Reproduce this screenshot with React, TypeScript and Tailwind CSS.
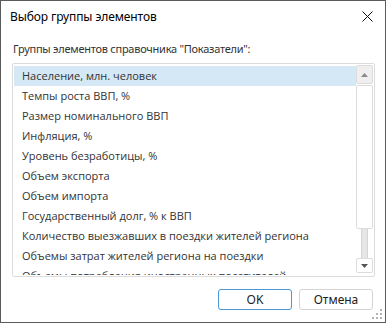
import React from 'react';

const items = [
  'Население, млн. человек',
  'Темпы роста ВВП, %',
  'Размер номинального ВВП',
  'Инфляция, %',
  'Уровень безработицы, %',
  'Объем экспорта',
  'Объем импорта',
  'Государственный долг, % к ВВП',
  'Количество выезжавших в поездки жителей региона',
  'Объемы затрат жителей региона на поездки',
  'Объемы потребления иностранных посетителей',
];

function Grip() {
  const dots = [
    [8, 0],
    [4, 4],
    [8, 4],
    [0, 8],
    [4, 8],
    [8, 8],
  ];
  return (
    <svg width="11" height="11" viewBox="0 0 11 11" className="absolute right-[2px] bottom-[2px]">
      {dots.map(([x, y], i) => (
        <rect key={i} x={x} y={y} width="2" height="2" fill="#b4b4b4" />
      ))}
    </svg>
  );
}

export default function App() {
  return (
    <div className="relative w-[386px] h-[323px] bg-white border border-[#5b5b5b] overflow-hidden font-['Open_Sans',sans-serif] text-[11px] text-[#1e1e1e]">
      {/* title */}
      <div className="flex items-center justify-between h-[31px] pl-[9px] pr-[12px]">
        <span className="font-['Noto_Sans',sans-serif] text-[12px] text-black tracking-[-0.1px]">Выбор группы элементов</span>
        <svg width="11" height="11" viewBox="0 0 11 11">
          <path d="M0.5 0.5 L10.5 10.5 M10.5 0.5 L0.5 10.5" stroke="#111" strokeWidth="1" />
        </svg>
      </div>

      <div className="px-[11px] pt-[9px]">
        <div className="font-['Noto_Sans',sans-serif] text-[11px] text-[#333] leading-[15px] pl-px tracking-[-0.25px]">
          Группы элементов справочника "Показатели":
        </div>

        {/* list */}
        <div className="mt-[7px] h-[214px] w-[363px] border border-[#dcdcdc] rounded-[2px] flex p-px overflow-hidden">
          <div className="flex-1 flex flex-col overflow-hidden">
            {items.map((t, i) => (
              <div
                key={t}
                className={`h-[20px] shrink-0 flex items-center pl-[8px] whitespace-nowrap text-[#333] ${
                  i === 0 ? 'bg-[#d5e8f5] mt-px' : ''
                }`}
              >
                {t}
              </div>
            ))}
          </div>
          {/* scrollbar */}
          <div className="w-[17px] flex flex-col">
            <div className="h-[19px] bg-[#efefef] border border-[#dcdcdc] rounded-[2px] flex items-center justify-center">
              <svg width="7" height="4" viewBox="0 0 7 4">
                <path d="M3.5 0 L7 4 L0 4 Z" fill="#8a8a8a" />
              </svg>
            </div>
            <div className="h-[144px] mt-px border border-[#dcdcdc] rounded-[2px] bg-white" />
            <div className="flex-1 flex justify-center">
              <div className="w-[7px] bg-[#e6e6e6] border-x border-[#d4d4d4]" />
            </div>
            <div className="h-[15px] border border-[#dcdcdc] rounded-[2px] bg-white flex items-center justify-center mb-[2px]">
              <svg width="7" height="4" viewBox="0 0 7 4">
                <path d="M0 0 L7 0 L3.5 4 Z" fill="#555" />
              </svg>
            </div>
          </div>
        </div>

        {/* buttons */}
        <div className="flex justify-end gap-[7px] mt-[12px] pr-px">
          <button className="w-[74px] h-[21px] border border-[#4a98d4] rounded-[3px] bg-white font-['Noto_Sans',sans-serif] text-[12px] text-[#222]">
            OK
          </button>
          <button className="w-[74px] h-[21px] border border-[#d3d3d3] rounded-[3px] bg-white font-['Noto_Sans',sans-serif] text-[12px] text-[#222]">
            Отмена
          </button>
        </div>
      </div>
      <Grip />
    </div>
  );
}
